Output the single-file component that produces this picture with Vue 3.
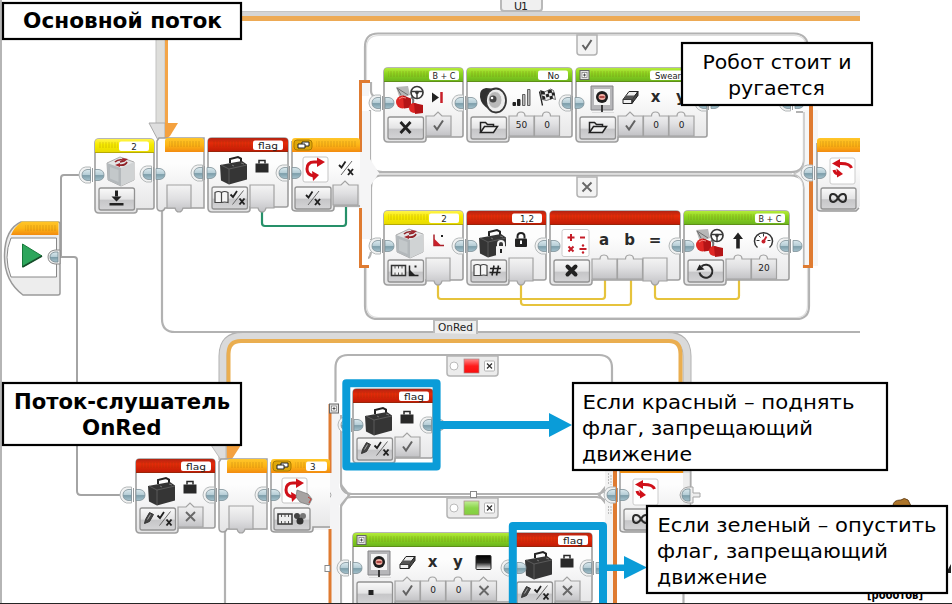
<script setup>
// Programming blocks: position, width, header colour, icon, mode icon and ports.
const blocks = [
  { x: 95, y: 139, w: 59, c: 'yellow', tag: '2', lx: 24, icon: 'cube', mode: 'download', ports: [] },
  { x: 208, y: 138, w: 80, c: 'red', tag: 'flag', lx: 45, icon: 'case', mode: 'bookcheck', ports: [{ k: 'out', i: 'smallcase' }] },
  { x: 384, y: 68, w: 79, c: 'green', tag: 'B + C', lx: 45, icon: 'motors', mode: 'cross', ports: [{ k: 'logic', i: 'brake', m: 'tick' }] },
  { x: 467, y: 68, w: 105, c: 'green', tag: 'No', lx: 71, icon: 'speaker', mode: 'folder', ports: [{ k: 'num', i: 'bars', v: '50' }, { k: 'num', i: 'flag', v: '0' }] },
  { x: 576, y: 68, w: 131, c: 'green', tag: 'Swear', lx: 74, lw: 53, tx: 92, plus: true, icon: 'screen', mode: 'folder', ports: [{ k: 'logic', i: 'eraser', m: 'tick' }, { k: 'num', s: 'x', v: '0' }, { k: 'num', s: 'y', v: '0' }] },
  { x: 384, y: 211, w: 79, c: 'yellow', tag: '2', lx: 45, icon: 'cube', mode: 'measure', ports: [{ k: 'out', i: 'angle' }] },
  { x: 467, y: 211, w: 79, c: 'red', tag: '1,2', lx: 45, icon: 'caselock', mode: 'bookhash', ports: [{ k: 'out', i: 'lock' }] },
  { x: 550, y: 211, w: 130, c: 'red', icon: 'math', mode: 'times', ports: [{ k: 'num', s: 'a' }, { k: 'num', s: 'b' }, { k: 'out', s: '=' }] },
  { x: 684, y: 211, w: 105, c: 'green', tag: 'B + C', lx: 71, icon: 'motors', mode: 'rotate', ports: [{ k: 'num', i: 'up' }, { k: 'num', i: 'gauge', v: '20' }] },
  { x: 136, y: 459, w: 79, c: 'red', tag: 'flag', lx: 45, icon: 'case', mode: 'writecheck', ports: [{ k: 'logic', i: 'smallcase', m: 'no' }] },
  { x: 353, y: 389, w: 80, c: 'red', tag: 'flag', lx: 46, icon: 'case', mode: 'writecheck', ports: [{ k: 'logic', i: 'smallcase', m: 'tick' }] },
  { x: 353, y: 533, w: 164, c: 'green', plus: true, icon: 'screen', mode: 'dot', ports: [{ k: 'logic', i: 'eraser', m: 'tick' }, { k: 'num', s: 'x', v: '0' }, { k: 'num', s: 'y', v: '0' }, { k: 'logic', i: 'shade', m: 'no' }] },
  { x: 513, y: 533, w: 79, c: 'red', tag: 'flag', lx: 45, icon: 'case', mode: 'writecheck', ports: [{ k: 'logic', i: 'smallcase', m: 'no' }] },
]
const joins = [
  [93, 175], [154, 174], [205, 173], [290, 173], [383, 103], [466, 103], [573, 103], [709, 103], [793, 103],
  [815, 173], [383, 246], [466, 246], [549, 246], [683, 246], [791, 246], [134, 495], [217, 495], [269, 495],
  [352, 425], [434, 425], [351, 568], [515, 568], [594, 568], [618, 495],
]
const tagWidths = { flag: 20, 'B + C': 23, Swear: 26, '1,2': 14 }
const body = (b) => {
  const { x, y, w } = b
  const foot = b.ports.length ? 69 : 70
  return `M${x} ${y + 4}q0-4 4-4H${x + w - 4}q4 0 4 4V${y + foot - 2}q0 2-2 2H${x + 42}V${y + 71}q0 3-3 3H${x + 4}q-4 0-4-4Z`
}
const head = (x, y, w) => `M${x} ${y + 14}V${y + 3}q0-3 3-3H${x + w - 3}q3 0 3 3V${y + 14}Z`
const port = (k, x, y) => {
  if (k === 'out') return `M${x} ${y - 1}h24v23h-8q-1 4-4 4t-4-4h-8Z`
  if (k === 'logic') return `M${x} ${y}h8l4-4 4 4h9v20h-25Z`
  return `M${x} ${y}h8q0-4 4-4t4 4h9v20h-25Z`
}
const notes = [
  { x: 3, y: 3, w: 238, h: 36, bold: true, lines: [['Основной поток', 23, 28, 199]] },
  { x: 3, y: 383, w: 238, h: 62, bold: true, lines: [['Поток-слушатель', 14, 409, 216], ['OnRed', 82, 434.5, 79.5]] },
  { x: 682, y: 43, w: 190, h: 62, lines: [['Робот стоит и', 702.5, 68.5, 149], ['ругается', 728, 94.5, 97]] },
  { x: 573, y: 383, w: 314, h: 87, lines: [['Если красный – поднять', 582.5, 408.5, 272], ['флаг, запрещающий', 582, 434.5, 231], ['движение', 582, 460.5, 110]] },
  { x: 647, y: 506, w: 300, h: 87, lines: [['Если зеленый – опустить', 657.500, 531.5, 279], ['флаг, запрещающий', 657, 557.5, 231], ['движение', 657, 583.5, 110]] },
]
</script>

<template>
  <svg class="canvas" width="952" height="604" viewBox="0 0 952 604">
    <defs>
      <linearGradient id="yellow" x2="0" y2="1"><stop stop-color="#fff34c" /><stop offset=".4" stop-color="#f7ec00" /><stop offset="1" stop-color="#e6d800" /></linearGradient>
      <linearGradient id="green" x2="0" y2="1"><stop stop-color="#b5eb3a" /><stop offset=".4" stop-color="#8cd420" /><stop offset="1" stop-color="#69b21c" /></linearGradient>
      <linearGradient id="red" x2="0" y2="1"><stop stop-color="#b02312" /><stop offset=".35" stop-color="#e52b09" /><stop offset="1" stop-color="#bd1a05" /></linearGradient>
      <linearGradient id="orange" x2="0" y2="1"><stop stop-color="#ffc62a" /><stop offset=".5" stop-color="#fdb515" /><stop offset="1" stop-color="#f28b10" /></linearGradient>
      <linearGradient id="body" x2="0" y2="1"><stop offset=".35" stop-color="#fdfdfd" /><stop offset="1" stop-color="#e4e4e5" /></linearGradient>
      <linearGradient id="button" x2="0" y2="1"><stop stop-color="#fafafa" /><stop offset=".5" stop-color="#e4e4e5" /><stop offset=".56" stop-color="#c6c6c8" /><stop offset="1" stop-color="#d4d4d6" /></linearGradient>
      <linearGradient id="slot" x2="0" y2="1"><stop stop-color="#f4f4f4" /><stop offset=".5" stop-color="#e0e0e2" /><stop offset="1" stop-color="#c2c2c5" /></linearGradient>
      <linearGradient id="steel" x2="0" y2="1"><stop stop-color="#d9e8ed" /><stop offset=".5" stop-color="#b4ccd5" /><stop offset=".55" stop-color="#7d9eaa" /><stop offset="1" stop-color="#a5c2cd" /></linearGradient>
      <linearGradient id="redlamp" x2="0" y2="1"><stop stop-color="#ff8a8a" /><stop offset=".5" stop-color="#ff1c1c" /><stop offset="1" stop-color="#fa0d0d" /></linearGradient>
      <linearGradient id="greenlamp" x2="0" y2="1"><stop stop-color="#c3ed98" /><stop offset=".5" stop-color="#8bd649" /><stop offset="1" stop-color="#84cd40" /></linearGradient>
      <linearGradient id="dark" x2="0" y2="1"><stop stop-color="#000" /><stop offset=".5" stop-color="#222" /><stop offset="1" stop-color="#fff" /></linearGradient>
      <pattern id="hatch" width="3" height="8" patternUnits="userSpaceOnUse"><path d="M1 0V8" stroke="#6b3b00" stroke-opacity=".2" /></pattern>

      <g id="join">
        <path d="M-2.500-8h-5q-6 1-6.500 8q.5 6 6.500 8h5Z" fill="#f1f2f2" stroke="#b4b8b9" />
        <path d="M-2.500-5.500h-3.500q-5 1-5 5.500t5 5.500h3.500Z" fill="url(#steel)" stroke="#809299" stroke-width=".8" />
        <path d="M2-5.500h4q5 1 5 5.500t-5 5.500h-4Z" fill="url(#steel)" stroke="#809299" stroke-width=".8" />
        <path d="M-.5-7V7" stroke="#979b9d" />
      </g>
      <g id="case">
        <path d="M10 6V2l8-2 3 1.500v4" fill="none" stroke="#222" stroke-width="2" />
        <path d="M0 8 22 4l5 3.500v15L9 27.500l-8-4Z" fill="#353535" /><path d="M1 8l8 4 18-4M9 12V27" fill="none" stroke="#6a6a6a" stroke-width=".7" />
        <path d="M12 8l2 1M21 6l3 1" stroke="#858585" stroke-width=".8" />
      </g>
      <g id="smallcase"><path d="M-6.500-4h13v9h-13Z" fill="#292929" /><path d="M-3-4v-3h6v3" fill="none" stroke="#292929" stroke-width="1.500" /></g>
      <g id="caselock"><use href="#case" /><rect x="17" y="16" width="10" height="10" rx="1" fill="#f4f4f4" /><path d="M19 16v-2q0-3 3-3t3 3v2" fill="none" stroke="#f4f4f4" stroke-width="2" /><path d="M22 19v4" stroke="#222" stroke-width="2" /></g>
      <g id="lock"><rect x="-6" y="-2" width="12" height="8.500" rx="1" fill="#222" /><path d="M-3.500-2v-2q0-3.500 3.500-3.500t3.500 3.500v2" fill="none" stroke="#222" stroke-width="2" /><path d="M0 0v3.500" stroke="#fff" stroke-width="2" /></g>
      <g id="cube">
        <path d="M0 5 13-1l14 5v18L14 28 1 22Z" fill="#e2e4e5" stroke="#999" stroke-width=".8" /><path d="M0 5l14 5v18L1 22Z" fill="#b3b8bb" /><path d="M14 10l13-6v18l-13 6Z" fill="#d0d3d4" />
        <path d="M3 9l8.500 3v12L3 20.500Z" fill="#c3c8ca" />
        <path d="M8 4q3-3 8-2M20 4q-2 4-8 3M13 4l4-1" stroke="#8f2227" stroke-width="1.700" fill="none" /><path d="M15 0l6 1-4 3ZM8 7l5-2v4Z" fill="#a1242b" />
      </g>
      <g id="motors">
        <path d="M0 0l12-1 2 9-10 4Z" fill="#b7b7b7" /><path d="M1 1l4 7M1 1l11 7" stroke="#707070" />
        <circle cx="6.500" cy="15" r="6.500" fill="#df2724" /><path d="M7 8.500l8 3v9l-7 1Z" fill="#b41416" /><path d="M15 10q4 2 1 9" stroke="#777" fill="none" stroke-width="2" />
        <circle cx="18" cy="21" r="5" fill="#df2724" /><path d="M18 16l9 2v8l-8 1Z" fill="#b41416" /><path d="M3 12q3-3 7-1" stroke="#f68b83" fill="none" />
        <circle cx="21" cy="5.500" r="6" fill="#fff" stroke="#383838" stroke-width="1.700" /><circle cx="21" cy="5.500" r="1.800" fill="#333" /><path d="M15 4.500h12M21 6v6" stroke="#383838" stroke-width="1.400" />
      </g>
      <g id="speaker"><path d="M1 10Q0 2 7 1l11 1v24l-8-4Q2 18 1 10Z" fill="#303030" /><ellipse cx="17" cy="13.500" rx="10" ry="12" fill="#eee" stroke="#363636" stroke-width="1.800" /><ellipse cx="16" cy="13" rx="7" ry="8.500" fill="#b9b9b9" stroke="#eee" /><circle cx="14" cy="12" r="3.500" fill="#454545" /><circle cx="13" cy="11" r="1.300" fill="#fff" /></g>
      <g id="bars"><path d="M-8 5h2.500v3H-8ZM-3.500 2H-1v6h-2.500Z" fill="#222" stroke="#222" /><path d="M1.500-3H4V8H1.500ZM6.500-8H9V8H6.500Z" fill="#bbb" stroke="#444" stroke-width=".8" /></g>
      <g id="flag"><path d="M-7-6-4 8" stroke="#222" stroke-width="1.300" /><path d="M-6-7q4 3 7 0t6 0l2 9q-3-2-6 0t-7 0Z" fill="#eee" stroke="#222" stroke-width=".6" /><path d="M-6-7l4 1 .7 3-4 0ZM1-7l4-1 .6 3-4 1ZM-1-3l3-1 1 3-3 1ZM5-5l3 0 .6 3-3 0ZM-4.500-2l3 1 .5 3h-3ZM3-1l3-1 .5 3-3 1Z" fill="#222" /></g>
      <g id="brake"><path d="M-6-5 1 0-6 5Z" fill="#222" /><path d="M3.500-5.500v11" stroke="#c8202a" stroke-width="2.500" /></g>
      <g id="screen"><path d="M3-1h22v24H3Z" fill="#b6b6b9" stroke="#858588" /><rect x="6" y="2" width="16" height="16" fill="#f5f5f5" /><circle cx="14" cy="10" r="6" fill="#1c1c1c" /><ellipse cx="14" cy="10" rx="3.500" ry="3" fill="#f1ada2" /><path d="M11.500 10h5" stroke="#8b1513" stroke-width="1.300" /><path d="M14 18v8" stroke="#222" stroke-width="1.700" /><path d="M4 25.500h22" stroke="#ddd" /></g>
      <g id="eraser"><path d="M-7 2l6-8H8L2 2Z" fill="#ededed" stroke="#222" /><path d="M-7 2H2v4h-9Z" fill="#f1f1f1" stroke="#222" /><path d="M2 2l6-8v4L2 6Z" fill="#494949" stroke="#222" /><path d="M-4-2h9L2 2h-9Z" fill="#555" /></g>
      <g id="shade"><rect x="-7.500" y="-7" width="15" height="14" rx="1" fill="url(#dark)" stroke="#222" /></g>
      <g id="angle"><path d="M-4-6V5H6" fill="none" stroke="#a92029" stroke-width="1.500" /><path d="M-4-2 3 5h-7Z" fill="#c9202a" /><path d="M4-5.500v2" stroke="#222" stroke-width="2" /></g>
      <g id="up"><path d="M0-8-5-1.500h3.200V8h3.600V-1.500H5Z" fill="#222" /></g>
      <g id="gauge"><path d="M-6 7a9 8.500 0 1 1 12 0" fill="#fff" stroke="#333" stroke-width="1.500" /><path d="M-7 0h3M7 0H4M0-7v3M-5-5l2 2" stroke="#333" /><path d="M0 1 3-4" stroke="#c8202a" stroke-width="1.800" /><circle cy="1" r="2" fill="#c8202a" /></g>
      <g id="math"><rect x="0" y="-.5" width="27" height="27" rx="2" fill="#fff" stroke="#ccc" /><path d="M5.500 7.500h7M9 4v7M18 7.500h5M6.500 16.500l5 5M11.500 16.500l-5 5M17.500 19h7" stroke="#c51d28" stroke-width="2" /><circle cx="21" cy="15.500" r="1.200" fill="#c51d28" /><circle cx="21" cy="22.500" r="1.200" fill="#c51d28" /></g>
      <g id="checkx"><path d="M-7-3l2.500 2.500 4-6" fill="none" stroke="#202020" stroke-width="1.800" /><path d="M6-7-5 7" stroke="#666" stroke-width="1" /><path d="M2 1l5 6M7 1 2 7" stroke="#202020" stroke-width="1.900" /></g>
      <g id="book"><path d="M0-5q-3-2-6.500 0V5H0q3-1 6.500 0V-5Q3-7 0-5V5" fill="#f6f6f6" stroke="#444" stroke-width="1.200" /></g>
      <g id="pencil"><path d="M-4 5l1-4 4-7 4 2-4 7Z" fill="#444" stroke="#333" /><path d="M-1 1l3-5" stroke="#aaa" /></g>
      <g id="ruler"><rect x="-7" y="-5" width="14" height="10" fill="#eee" stroke="#333" stroke-width="1.500" /><path d="M-3.500-5v3M0-5v3M3.500-5v3M-3.500 5V2M0 5V2M3.500 5V2" stroke="#444" stroke-width=".9" /></g>
      <g id="download"><path d="M0-8v6" stroke="#222" stroke-width="3" /><path d="M-5-2H5L0 3ZM-7 4.500H7v2.500H-7Z" fill="#222" /></g>
      <g id="bookcheck"><use href="#book" x="-8" /><use href="#checkx" x="8" /></g>
      <g id="bookhash"><use href="#book" x="-8" /><path d="M5.500-5 3.500 5M10-5 8 5M1.500-2h11M1 2h11" stroke="#222" stroke-width="1.600" /></g>
      <g id="writecheck"><use href="#pencil" x="-9" /><use href="#checkx" x="7" /></g>
      <g id="measure"><use href="#ruler" x="-7" /><path d="M4-5V5h9" fill="none" stroke="#222" stroke-width="1.500" /><path d="M4-1l6 6H4Z" fill="#222" /><path d="M10-5v2" stroke="#222" stroke-width="2" /></g>
      <g id="cross"><path d="M-5-5.500 5 5.500M5-5.500-5 5.500" stroke="#222" stroke-width="2.800" /></g>
      <g id="times"><path d="M-4-4 4 4M4-4-4 4" stroke="#222" stroke-width="4" stroke-linecap="round" /></g>
      <g id="folder"><path d="M-8 5V-5h5l2 2h6v2" fill="none" stroke="#222" stroke-width="1.500" /><path d="M-8 5l4-6H9L5 5Z" fill="#eee" stroke="#222" stroke-width="1.500" /></g>
      <g id="rotate"><path d="M-4-4a6.500 6.500 0 1 1-2 6" fill="none" stroke="#2a2a2a" stroke-width="2" /><path d="M-9 0l3-6 5 5Z" fill="#222" /></g>
      <g id="dot"><path d="M-6-2.500h5v5h-5Z" fill="#222" /></g>
      <g id="tick"><path d="M-4.500 0-1.500 4 4.500-5" fill="none" stroke="#626262" stroke-width="2" /></g>
      <g id="no"><path d="M-4.500-4.500l9 9M4.500-4.500l-9 9" fill="none" stroke="#686868" stroke-width="1.900" /></g>
      <g id="loopback"><rect width="25" height="26" rx="2" fill="#fff" stroke="#ccc" /><path d="M21.500 10Q20 5 9 5.500" fill="none" stroke="#d01019" stroke-width="3" /><path d="M10 1v9L2 5.500Z" fill="#d01019" /><path d="M4 12q1 4 4 3.500" fill="none" stroke="#d01019" stroke-width="3" /><path d="M6.500 10.500l6.500 5.500-6 3.500Z" fill="#d01019" /></g>
      <g id="switcher"><path d="M15 5H11Q4 5 4 12q0 6 7 7" fill="none" stroke="#cf1019" stroke-width="3" /><path d="M14 .5 22 5l-8 5ZM9 14l7 4-6 6Z" fill="#cf1019" /></g>
      <g id="inf"><path d="M0 0C3-5.500 8-5 8 0S3 5.500 0 0-8-5-8 0-3 5.500 0 0Z" fill="none" stroke="#2b2b2b" stroke-width="2" /></g>
      <g id="stack"><rect x="-9" y="-5" width="18" height="10" rx="3" fill="#dda70b" stroke="#ab7b00" /><path d="M-1-3h7v4h-7Z" fill="#fff" stroke="#222" /><path d="M-5-1h7v4h-7Z" fill="#fff" stroke="#222" /></g>
      <g id="plus"><rect width="9" height="9" fill="#e5e5e5" stroke="#666" /><rect x="2" y="2" width="5" height="5" fill="#fff" stroke="#777" stroke-width=".7" /><path d="M3 4.500h3M4.500 3v3" stroke="#333" stroke-width=".8" /></g>
    </defs>

    <rect width="952" height="604" fill="#fff" />
    <rect width="2" height="604" fill="#b5b5b5" />

    <!-- main loop -->
    <path d="M242 11H860v5H242Z" fill="#d5d5d5" /><path d="M242 16H860v5H242Z" fill="#edaa55" />
    <path d="M242 11.500H860" stroke="#c5c5c5" />
    <path d="M156 39h9v85h-9Z" fill="#dededb" stroke="#c2c2c2" /><path d="M165 39h3v85h-3Z" fill="#f3a548" />
    <path d="M149 123h16v15l-7 2Z" fill="#dedede" stroke="#aaa" /><path d="M165 123h13l-8 13-5 4Z" fill="#f4a13f" />
    <path d="M501 0v8q0 3 3 3h35q3 0 3-3V0" fill="#f0f0f0" stroke="#b9b9b9" stroke-width="2" />
    <text class="port wide" x="514" y="9.500" textLength="14">U1</text>
    <path class="frame" d="M162 209V319Q162 332 175 332H860" />

    <!-- sensor loop -->
    <path d="M223 460V356Q223 336 243 336H667Q687 336 687 356V495" fill="none" stroke="#b2b2b2" stroke-width="9" />
    <path d="M223 460V356Q223 336.500 243 336.500H667Q687 336.500 687 356V495" fill="none" stroke="#dadada" stroke-width="7" />
    <path d="M228.500 460V354Q228.500 341 241 341H669Q680.500 341 680.500 354V460" fill="none" stroke="#eaae50" stroke-width="4" />
    <path d="M211 445h15v14l-5 1Z" fill="#ddd" stroke="#bbb" /><path d="M227 445h14l-9 14h-5Z" fill="#f4a13f" />
    <path class="frame" d="M225 530V604M683.500 590V604" />
    <path d="M434 333V320h43v14" fill="#eee" stroke="#bbb" stroke-width="2" />
    <text class="port wide" x="438" y="330.500" textLength="35" lengthAdjust="spacingAndGlyphs">OnRed</text>

    <!-- start wires -->
    <path class="lead" d="M80 175H64q-3 0-3 3V257h13q3 0 3 3V491q0 4 4 4H120" />

    <!-- main switch frames -->
    <g class="frame">
      <path d="M365 82V47Q365 33.500 378 33.500H794Q808 34 808 48V90" />
      <path d="M371 82V91q0 4 4 6M370 110V159Q370 172 383 172H791Q804 172 804 159V112h-8" />
      <path d="M380 175.500H791Q804 176 804 188V268M380 175.500Q371 176 371 188V240M371 252q-1 6-3 6" />
      <path d="M365 268V306Q365 319 378 319H796Q809 319 809 306V268" />
    </g>
    <path class="inner" d="M366.500 81V48Q366.500 35.500 379 35.500H794Q806.500 35.500 806.500 48M379 173.500H792M366.500 268V305Q366.500 317.500 379 317.500H796Q807.500 317.500 807.500 305V268" />
    <path d="M292 152H361V83h8v13h-9v15h10v48l9 14-8 12v54h-9v20h-2V208H333v-1h-41Z" fill="#f5f5f6" />
    <path class="bracket" d="M360.500 152V81.500H370M360.500 208V266.500H369" />
    <path d="M794 174q9-2 9-10V110h15v156h-14v-76q-1-10-10-16" fill="#f6f6f6" />
    <path d="M804 112V161q0 9-10 13 10 4 10 14V265" fill="none" stroke="#bdbdbd" stroke-width="1.300" />
    <path d="M809 105h4v163h-10v-3h6Z" fill="#df7b31" />
    <g v-for="(y, i) in [35, 177]" :key="y"><path :d="`M577 ${y}h20v17q0 3-3 3h-14q-3 0-3-3Z`" fill="#f3f3f3" stroke="#b2b2b2" stroke-width="1.500" /><use :href="i ? '#no' : '#tick'" x="587" :y="y + 10" /></g>

    <!-- sensor switch frames -->
    <g class="frame">
      <path d="M335.500 402V368Q335.500 355 348 355H599Q612 355 612 368V400" />
      <path d="M341 415V483Q341 494 352 494H597Q607 493 607 482V470" />
      <path d="M341 604V508Q341 497 352 497H597Q607 498 607 509V604" />
      <path d="M341 485l8 10-8 11M608 484l-9 11 9 11" />
    </g>
    <path d="M271 473h59v-2h1v-58h9v15h-1v60l8 8-8 10v98h-8v-74H293Z" fill="#f4f4f5" />
    <path class="bracket" d="M330 473V404M330 529V604" />
    <path d="M605 470h12v134h-12Z" fill="#f3f3f3" /><path d="M613 470h4v134h-4Z" fill="#df7b31" />
    <path d="M608.500 473v12M611 475v10M608.500 506v8M611 506v8" stroke="#bbb" stroke-dasharray="2 1" />
    <use href="#plus" x="329.500" y="404" />
    <g v-for="t in [{ y: 356, f: 'redlamp' }, { y: 498, f: 'greenlamp' }]" :key="t.y">
      <path :d="`M447 ${t.y}h51v17q0 3-3 3h-45q-3 0-3-3Z`" fill="#ececec" stroke="#b4b4b4" stroke-width="1.500" />
      <circle cx="454" :cy="t.y + 10" r="4" fill="#fff" stroke="#bbb" /><rect x="464" :y="t.y + 3" width="15" height="14" :fill="`url(#${t.f})`" stroke="#a88" stroke-width=".7" />
      <rect x="484.500" :y="t.y + 5" width="10" height="10" rx="1" fill="#fff" stroke="#b4b4b4" /><path :d="`M487 ${t.y + 7.500}l5 5m0-5l-5 5`" stroke="#333" stroke-width="1.300" />
    </g>
    <rect x="470.500" y="491.500" width="6" height="6" fill="#fff" stroke="#888" /><circle cx="328" cy="495" r="3" fill="#fff" stroke="#aaa" /><rect x="325" y="565.500" width="5" height="6" fill="#fff" stroke="#888" />

    <!-- start block -->
    <path d="M21 222H58q2 0 2 2V293q0 2-2 2H23Q4 281 4.500 255T21 222Z" fill="#ededed" stroke="#9a9a9a" stroke-width="1.500" />
    <path d="M11 235Q14 227 22 221.500H58.500V235Z" fill="url(#orange)" /><path d="M25 225H57v6H25Z" fill="url(#hatch)" />
    <path d="M11 238H56.500v39H11Q3 257 11 238Z" fill="#fff" stroke="#888" /><path d="M22.500 244v23L42 256Z" fill="#2da65c" stroke="#167a3a" /><path d="M22.500 267 42 256" stroke="#174d2b" stroke-width="1.500" />
    <path d="M60 250h-5q-7 1-7 7t7 7h5Z" fill="#eee" stroke="#8a8a8a" /><path d="M58 252h-3q-5 1-5 5t5 5h3Z" fill="url(#steel)" stroke="#71868e" stroke-width=".8" />

    <!-- loop entrances -->
    <g v-for="e in [{ x: 157, y: 138, w: 47 }, { x: 219, y: 459, w: 48 }]" :key="e.x">
      <path :d="`M${e.x + 2} ${e.y}H${e.x + e.w}V${e.y + 70}H${e.x + 8}q-1 3-4 3-4 0-4-4V${e.y + 3}Z`" fill="url(#body)" stroke="#a0a0a0" stroke-width="1.500" />
      <path :d="head(e.x + 8, e.y, e.w - 8)" fill="url(#orange)" /><rect :x="e.x + 12" :y="e.y + 3" :width="e.w - 16" height="6" fill="url(#hatch)" />
      <path :d="port('out', e.x + 10, e.y + 48)" class="slot" />
    </g>

    <!-- switch entrances -->
    <g v-for="s in [{ x: 292, y: 138, w: 68 }, { x: 271, y: 459, w: 59 }]" :key="s.x">
      <path :d="`M${s.x} ${s.y + 3}V${s.y + 70}q0 3 4 3h35q3 0 3-3v-3H${s.x + s.w}V${s.y + 14}Z`" fill="url(#body)" />
      <path :d="`M${s.x} ${s.y + 3}V${s.y + 70}q0 3 4 3h35q3 0 3-3v-2h${s.w - 42}`" fill="none" stroke="#999" stroke-width="1.500" />
      <path :d="head(s.x, s.y, s.w)" fill="url(#orange)" /><rect :x="s.x + 24" :y="s.y + 3" :width="s.w - 28" height="6" fill="url(#hatch)" /><use href="#stack" :x="s.x + 11" :y="s.y + 7" />
      <rect :x="s.x + 3" :y="s.y + 49" width="36" height="22" rx="2" class="btn" />
      <rect :x="s.x + 11" :y="s.y + 19" width="25" height="25" rx="2" fill="#fff" stroke="#c5c5c5" /><use href="#switcher" :x="s.x + 11" :y="s.y + 19" />
    </g>
    <use href="#checkx" x="313" y="198" /><use href="#checkx" x="346" y="168" />
    <path :d="port('logic', 333, 185)" class="slot" />
    <rect x="306" y="461.500" width="21" height="9.500" rx="2" fill="#fff" /><text class="tag" x="310" y="469.500">3</text>
    <path d="M297 490l11 4 4 5-3 6-9-3-4-5Z" fill="#a6a3a2" stroke="#777" stroke-width=".7" /><path d="M308 497l3 2-2 4" stroke="#c53b35" fill="none" />
    <use href="#ruler" x="285" y="519" /><circle cx="297" cy="516" r="3" fill="#444" /><circle cx="303" cy="516" r="3" fill="#777" /><circle cx="300" cy="521" r="3.500" fill="#333" />

    <!-- loop exits -->
    <g v-for="l in [{ x: 817, y: 138, w: 43 }, { x: 620, y: 459, w: 63 }]" :key="l.x">
      <path :d="`M${l.x} ${l.y + 3}V${l.y + 70}q0 3 4 3h36l3-5h${l.w - 43}V${l.y}Z`" fill="url(#body)" /><path :d="`M${l.x} ${l.y + 5}V${l.y + 70}q0 3 4 3h35l3-3`" fill="none" stroke="#999" stroke-width="1.500" />
      <path :d="`M${l.x} ${l.y + 14}v-11q0-3 3-3h${l.w - 3}v14Z`" fill="url(#orange)" /><rect :x="l.x + 3" :y="l.y + 3" :width="l.w - 3" height="6" fill="url(#hatch)" />
      <use href="#loopback" :x="l.x + 13" :y="l.y + 20" /><rect :x="l.x + 4" :y="l.y + 50" width="35" height="21" rx="2" class="btn" /><use href="#inf" :x="l.x + 21" :y="l.y + 60" />
    </g>
    <path d="M683 473h7v54h-7Z" fill="#eee" /><path d="M690.500 470V526" stroke="#aaa" stroke-width="1.500" />
    <path d="M693 487h-5q-7 1-8 8 1 7 8 8h5v-6h7v-4h-7Z" fill="#eee" stroke="#a5a5a5" /><path d="M690 489h-3q-5 1-5 6t5 6h3Z" fill="url(#steel)" stroke="#71868e" stroke-width=".8" />

    <!-- data wires -->
    <g fill="none" stroke-width="2.200"><path d="M262 209V223q0 3 3 3H343q3 0 3-3V207" stroke="#269069" /><path d="M438 284V296q0 3 3 3H602q3 0 3-3V280M521 284V302q0 3 3 3H628q3 0 3-3V280M655 284V296q0 3 3 3H736q3 0 3-3V280" stroke="#e6c33c" /></g>

    <!-- blocks -->
    <g v-for="(b, bi) in blocks" :key="bi">
      <path :d="body(b)" fill="url(#body)" stroke="#9e9e9e" stroke-width="1.600" />
      <path :d="head(b.x, b.y, b.w)" :fill="`url(#${b.c})`" />
      <rect :x="b.x + 4" :y="b.y + 3" :width="(b.tag ? b.lx : b.w - 4) - 5" height="6" fill="url(#hatch)" />
      <path :d="`M${b.x} ${b.y + 13.500}h${b.w}`" stroke="#433c10" stroke-opacity=".3" />
      <use v-if="b.plus" href="#plus" :x="b.x + 4" :y="b.y + 2.500" />
      <template v-if="b.tag"><rect :x="b.x + b.lx" :y="b.y + 2.500" :width="b.lw || 30" height="9.500" rx="2" fill="#fff" /><text class="tag" :x="b.x + (b.tx || b.lx + 15) - (tagWidths[b.tag] || (b.tag.length > 1 ? 11 : 5.500)) / 2" :y="b.y + 10.500" :textLength="tagWidths[b.tag]" lengthAdjust="spacingAndGlyphs">{{ b.tag }}</text></template>
      <rect :x="b.x + 4" :y="b.y + 49" width="35.500" height="22" rx="2" class="btn" /><use :href="'#' + b.mode" :x="b.x + 21.500" :y="b.y + 59.500" />
      <use :href="'#' + b.icon" :x="b.x + 12" :y="b.y + 19" />
      <g v-for="(p, i) in b.ports" :key="i">
        <path :d="port(p.k, b.x + 42 + i * 25.500, b.y + 48)" class="slot" />
        <use v-if="p.i" :href="'#' + p.i" :x="b.x + 54 + i * 25.500" :y="b.y + 29.500" />
        <text v-if="p.s" class="symbol" :x="b.x + 54 + i * 25.500" :y="b.y + 34">{{ p.s }}</text>
        <text v-if="p.v" class="port" text-anchor="middle" :x="b.x + 54.500 + i * 25.500" :y="b.y + 60">{{ p.v }}</text>
        <use v-if="p.m" :href="'#' + p.m" :x="b.x + 54.500 + i * 25.500" :y="b.y + 57.500" />
      </g>
    </g>
    <use v-for="(j, i) in joins" :key="'j' + i" href="#join" :x="j[0]" :y="j[1]" />

    <!-- emblem in the corner -->
    <path d="M893 506q0-6 8-6 3-3 7 0l3 6Z" fill="#ad752a" stroke="#6a4519" /><path d="M946 573l5 0v-9Z" fill="#222" />
    <text x="867" y="599" font-size="12" font-weight="bold" textLength="56" lengthAdjust="spacingAndGlyphs">[роботов]</text>

    <!-- highlights and arrows -->
    <g fill="none" stroke="#0a9cd8" stroke-width="8"><rect x="346.300" y="383.300" width="90.300" height="83.300" stroke-linejoin="round" /><path d="M512.800 608V526H603V608" stroke-linejoin="round" /></g>
    <path d="M440 421H549V413l23 12-23 12v-8H440ZM607 564.500h17v-8.500l23 11.500-23 11.500v-8h-17Z" fill="#0a9cd8" />

    <!-- captions -->
    <g v-for="n in notes" :key="n.x + '-' + n.y">
      <rect :x="n.x" :y="n.y" :width="n.w" :height="n.h" fill="#fff" stroke="#000" stroke-width="2.200" />
      <text v-for="l in n.lines" :key="l[0]" :class="['caption', { strong: n.bold }]" :x="l[1]" :y="l[2]" :textLength="l[3]" lengthAdjust="spacingAndGlyphs">{{ l[0] }}</text>
    </g>
    <rect y="603" width="952" height="1" fill="#252525" />
  </svg>
</template>

<style>
body { margin: 0; background: #fff; overflow: hidden; }
</style>
<style scoped>
.canvas { display: block; font-family: "DejaVu Sans", Verdana, sans-serif; }
.caption { font-size: 20.3px; fill: #000; }
.strong { font-size: 20.6px; font-weight: bold; }
.tag { font-size: 8.8px; fill: #222; }
.port { font-size: 9px; fill: #222; }
.wide { font-size: 11px; }
.symbol { font-size: 15px; font-weight: bold; text-anchor: middle; fill: #2a2a2a; }
.frame { fill: none; stroke: #b2b2b2; stroke-width: 2.2; }
.inner { fill: none; stroke: #dedede; stroke-width: 1.2; }
.lead { fill: none; stroke: #a4a4a4; stroke-width: 2; }
.bracket { fill: none; stroke: #df7b31; stroke-width: 3; }
.slot { fill: url(#slot); stroke: #a2a2a2; stroke-width: 1.2; }
.btn { fill: url(#button); stroke: #929292; stroke-width: 1.3; }
</style>
